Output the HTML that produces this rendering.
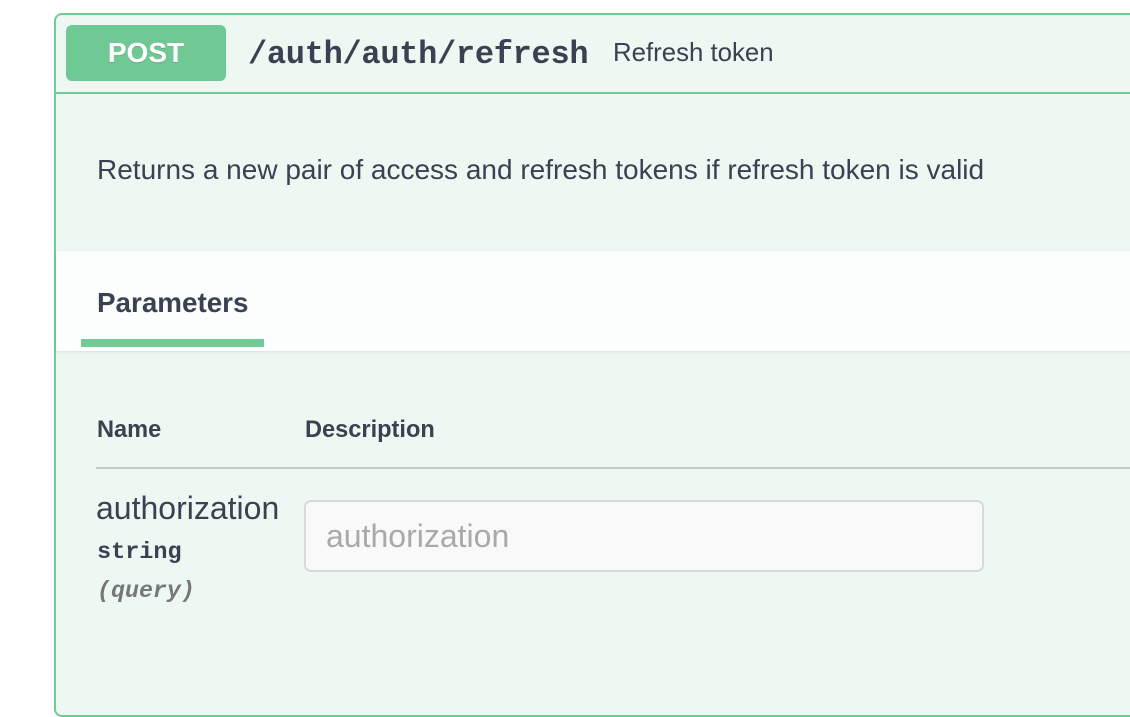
<!DOCTYPE html>
<html><head><style>
html,body{margin:0;width:1130px;height:660px;background:#fff;overflow:hidden;font-family:"Liberation Sans",sans-serif;color:#3b4151;}
.box{position:absolute;left:54px;top:13px;width:1100px;height:700px;border:2px solid #72cb96;border-radius:8px;background:#eef8f3;}
.hdr{position:absolute;left:0;top:0;right:0;height:77px;border-bottom:2px solid #72cb96;}
.badge{position:absolute;left:10px;top:10px;width:160px;height:56px;background:#70c994;border-radius:6px;color:#fff;font-weight:bold;font-size:28px;text-align:center;line-height:56px;text-shadow:0 1px 0 rgba(0,0,0,.15);}
.path{position:absolute;left:192px;top:21px;font-family:"Liberation Mono",monospace;font-weight:bold;font-size:32px;letter-spacing:-0.3px;}
.sum{position:absolute;left:557px;top:24px;font-size:25.8px;}
.desc{position:absolute;left:41px;top:139px;font-size:28px;}
.params{position:absolute;left:0;top:236px;right:0;height:100px;background:rgba(255,255,255,.8);box-shadow:0 1px 2px rgba(0,0,0,.1);}
.ptitle{position:absolute;left:41px;top:36px;font-size:27.8px;font-weight:bold;}
.uline{position:absolute;left:25px;top:88px;width:183px;height:8px;background:#72cb96;}
.th{position:absolute;top:402px;font-size:23.6px;font-weight:bold;}
.line{position:absolute;left:40px;top:452px;right:0;height:2px;background:#c6cbc8;}
.name{position:absolute;left:40px;top:475px;font-size:32px;}
.type{position:absolute;left:41px;top:524px;font-family:"Liberation Mono",monospace;font-weight:bold;font-size:23.5px;}
.q{position:absolute;left:41px;top:563px;font-family:"Liberation Mono",monospace;font-weight:bold;font-style:italic;font-size:23.3px;color:#777;}
.inp{position:absolute;left:248px;top:485px;height:68px;border:2px solid #d9d9d9;border-radius:7px;background:#f8f9f8;font-size:32px;color:#a9a9a9;line-height:68px;padding-left:20px;width:656px;}
</style></head><body>
<div class="box">
<div class="hdr"><div class="badge">POST</div><div class="path">/auth/auth/refresh</div><div class="sum">Refresh token</div></div>
<div class="desc">Returns a new pair of access and refresh tokens if refresh token is valid</div>
<div class="params"><div class="ptitle">Parameters</div><div class="uline"></div></div>
<div class="th" style="left:41px">Name</div>
<div class="th" style="left:249px">Description</div>
<div class="line"></div>
<div class="name">authorization</div>
<div class="type">string</div>
<div class="q">(query)</div>
<div class="inp">authorization</div>
</div>
</body></html>
